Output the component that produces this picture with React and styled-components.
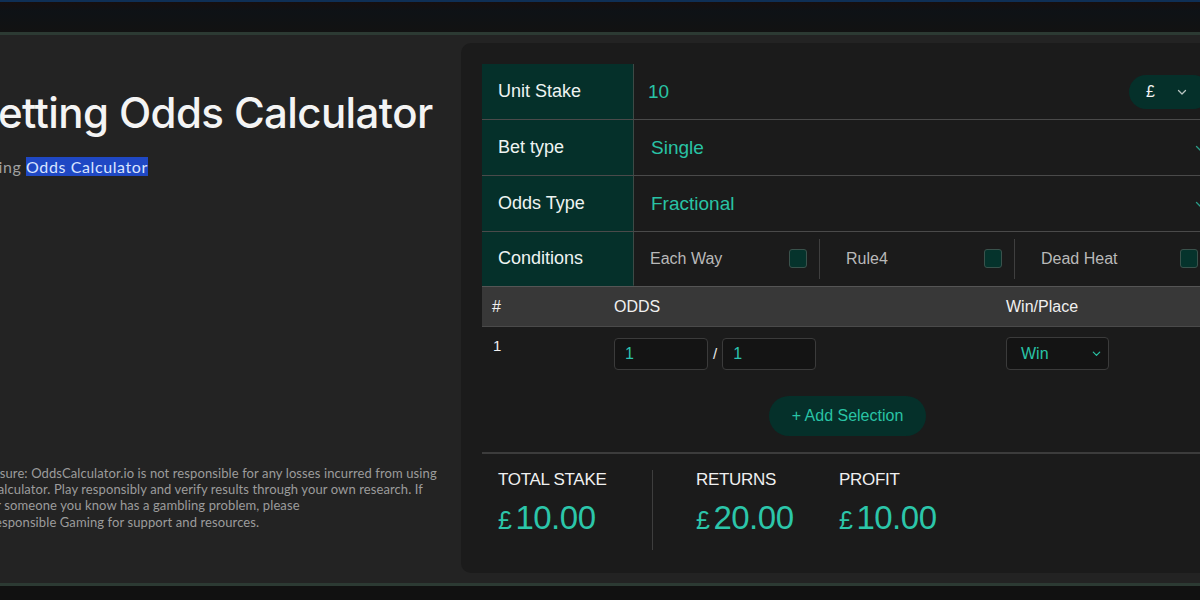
import styled, { createGlobalStyle } from 'styled-components';

const GlobalStyle = createGlobalStyle`
  body {
    margin: 0;
    background: #121212;
    overflow: hidden;
    font-family: "Liberation Sans", Arial, sans-serif;
  }
`;

const Page = styled.div`
  width: 1200px;
  height: 600px;
  display: flex;
  flex-direction: column;
  overflow: hidden;
  background: #111;
`;

const TopBar = styled.div`
  height: 30px;
  flex-shrink: 0;
  border-top: 2px solid #0f2f55;
  background: linear-gradient(#160f0f, #0e1216 30%, #121212);
`;

const Main = styled.main`
  height: 548px;
  flex-shrink: 0;
  display: grid;
  grid-template-columns: 461px 760px;
  background: #232323;
  border-top: 3px solid #2c3a33;
  border-bottom: 3px solid #2c3a33;
  overflow: hidden;
`;

const Intro = styled.section`
  display: flex;
  flex-direction: column;
  padding-top: 52px;
  overflow: hidden;
  font-family: "Lato", "Inter", sans-serif;
`;

const Title = styled.h1`
  margin: 0 0 0 ${p => p.$shift}px;
  font-family: "Inter", sans-serif;
  font-size: 42px;
  font-weight: 500;
  letter-spacing: -0.6px;
  color: #f4f4f4;
  white-space: nowrap;
`;

const Crumb = styled.p`
  margin: 19px 0 0 ${p => p.$shift}px;
  font-size: 16px;
  color: #a0a0a0;
  white-space: nowrap;
  letter-spacing: 0.6px;
`;

const Selected = styled.span`
  background: #1f48c4;
  color: #d9e4ff;
`;

const Disclaimer = styled.p`
  margin: auto 0 53px ${p => p.$shift}px;
  font-size: 13px;
  line-height: 16.3px;
  color: #9c9c9c;
  white-space: nowrap;
  letter-spacing: 0.1px;
`;

const Line = styled.span`
  display: block;
  margin-left: ${p => p.$indent || 0}px;
`;

const Card = styled.section`
  margin-top: 8px;
  margin-bottom: 10px;
  background: #1b1b1b;
  border-radius: 10px 0 0 10px;
  padding: 21px 0 0 21px;
  display: flex;
  flex-direction: column;
`;

const SettingsTable = styled.div`
  display: grid;
  grid-template-columns: 152px 1fr;
`;

const Label = styled.div`
  height: ${p => p.$h || 56}px;
  display: flex;
  align-items: center;
  padding-left: 16px;
  background: #05302a;
  color: #eef4f2;
  font-size: 18px;
  border-bottom: 1px solid ${p => (p.$last ? 'transparent' : '#4a4a4a')};
  border-right: 1px solid #3d4a46;
  box-sizing: border-box;
`;

const Value = styled.div`
  height: ${p => p.$h || 56}px;
  display: flex;
  align-items: center;
  padding: 0 0 0 ${p => p.$pad ?? 17}px;
  color: #29c3a5;
  font-size: 19px;
  border-bottom: 1px solid ${p => (p.$last ? 'transparent' : '#4a4a4a')};
  box-sizing: border-box;
  justify-content: space-between;
`;

const CurrencyPill = styled.div`
  display: flex;
  align-items: center;
  gap: 21px;
  height: 34px;
  padding: 0 22px 0 17px;
  margin-right: 11px;
  border-radius: 17px;
  background: #05302a;
  color: #f2f2f2;
  font-size: 16px;
`;

const Chevron = ({ color = '#b9c4c1', size = 12 }) => (
  <svg width={size} height={size} viewBox="0 0 12 12" fill="none">
    <path d="M2.5 4.5 6 8l3.5-3.5" stroke={color} strokeWidth="1.3" strokeLinecap="round" strokeLinejoin="round" />
  </svg>
);

const EdgeChevron = styled.span`
  margin-right: 15px;
  display: flex;
`;

const Conditions = styled.div`
  display: grid;
  grid-template-columns: 186px 195px 195px;
  height: 100%;
  width: 100%;
  align-items: center;
`;

const Condition = styled.div`
  display: flex;
  align-items: center;
  justify-content: space-between;
  height: 40px;
  padding: 0 12px 0 ${p => (p.$first ? 16 : 26)}px;
  color: #b9b9b9;
  font-size: 16px;
  border-right: ${p => (p.$divider ? '1px solid #3f3f3f' : 'none')};
`;

const Check = styled.span`
  width: 16px;
  height: 17px;
  border-radius: 3px;
  background: #05332c;
  border: 1px solid #3a524c;
`;

const SelHeader = styled.div`
  display: grid;
  grid-template-columns: 122px 392px 1fr;
  height: 39px;
  align-items: center;
  padding-left: 10px;
  background: #383838;
  color: #f0f0f0;
  font-size: 16px;
  border-top: 1px solid #555;
  border-bottom: 1px solid #4a4a4a;
`;

const SelRow = styled.div`
  display: grid;
  grid-template-columns: 121px 392px 1fr;
  align-items: start;
  padding: 10px 0 0 11px;
  height: 69px;
  box-sizing: border-box;
  color: #f0f0f0;
  font-size: 15px;
`;

const Odds = styled.div`
  display: flex;
  align-items: center;
  gap: 5px;
  height: 33px;
  color: #eaeaea;
`;

const OddsInput = styled.div`
  width: 94px;
  height: 32px;
  box-sizing: border-box;
  display: flex;
  align-items: center;
  padding-left: 10px;
  border: 1px solid #3b3b3b;
  border-radius: 4px;
  background: #141414;
  color: #2cc2b0;
  font-size: 16px;
`;

const Select = styled.div`
  width: 103px;
  height: 33px;
  box-sizing: border-box;
  display: flex;
  align-items: center;
  justify-content: space-between;
  padding: 0 6px 0 14px;
  border: 1px solid #3b3b3b;
  border-radius: 4px;
  background: #141414;
  color: #29c3a5;
  font-size: 16px;
`;

const AddRow = styled.div`
  display: flex;
  align-items: flex-start;
  padding-left: 287px;
  height: 56px;
`;

const AddButton = styled.button`
  width: 157px;
  height: 40px;
  border: none;
  border-radius: 20px;
  background: #05302a;
  color: #29c3a5;
  font-family: "Liberation Sans", Arial, sans-serif;
  font-size: 16px;
  cursor: pointer;
`;

const Totals = styled.div`
  display: flex;
  align-items: flex-start;
  border-top: 2px solid #3c3c3c;
  padding: 16px 0 0 16px;
  flex: 1;
`;

const Stat = styled.div`
  display: flex;
  flex-direction: column;
  gap: 9px;
  margin-right: ${p => p.$mr || 0}px;
  border-right: ${p => (p.$divider ? '1px solid #3e3e3e' : 'none')};
  height: 80px;
`;

const StatLabel = styled.div`
  color: #f0f0f0;
  font-size: 17px;
  letter-spacing: -0.3px;
`;

const Amount = styled.div`
  color: #2cc6aa;
  font-size: 33px;
  letter-spacing: -0.5px;
  display: flex;
  align-items: baseline;
  gap: 4px;
`;

const Pound = styled.span`
  font-size: 25px;
`;

const stats = [
  { label: 'TOTAL STAKE', value: '10.00', divider: true, width: 154 },
  { label: 'RETURNS', value: '20.00', width: 143 },
  { label: 'PROFIT', value: '10.00', width: 150 },
];

export default function App() {
  return (
    <Page>
      <GlobalStyle />
      <TopBar />
      <Main>
        <Intro>
          <Title $shift={-29}>Betting Odds Calculator</Title>
          <Crumb $shift={-34}>
            Betting <Selected>Odds Calculator</Selected>
          </Crumb>
          <Disclaimer $shift={-36}>
            <Line>Disclosure: OddsCalculator.io is not responsible for any losses incurred from using</Line>
            <Line $indent={3}>this calculator. Play responsibly and verify results through your own research. If</Line>
            <Line>you or someone you know has a gambling problem, please</Line>
            <Line $indent={-4}>visit Responsible Gaming for support and resources.</Line>
          </Disclaimer>
        </Intro>

        <Card>
          <SettingsTable>
            <Label>Unit Stake</Label>
            <Value $pad={14}>
              10
              <CurrencyPill>
                £
                <Chevron />
              </CurrencyPill>
            </Value>
            <Label>Bet type</Label>
            <Value>
              Single
              <EdgeChevron><Chevron color="#2a9c88" /></EdgeChevron>
            </Value>
            <Label>Odds Type</Label>
            <Value>
              Fractional
              <EdgeChevron><Chevron color="#2a9c88" /></EdgeChevron>
            </Value>
            <Label $h={54} $last>Conditions</Label>
            <Value $h={54} $pad={0} $last>
              <Conditions>
                <Condition $first $divider>
                  Each Way <Check />
                </Condition>
                <Condition $divider>
                  Rule4 <Check />
                </Condition>
                <Condition>
                  Dead Heat <Check />
                </Condition>
              </Conditions>
            </Value>
          </SettingsTable>

          <SelHeader>
            <span>#</span>
            <span>ODDS</span>
            <span>Win/Place</span>
          </SelHeader>
          <SelRow>
            <span>1</span>
            <Odds>
              <OddsInput>1</OddsInput>/<OddsInput>1</OddsInput>
            </Odds>
            <Select>
              Win
              <Chevron color="#29c3a5" size={11} />
            </Select>
          </SelRow>
          <AddRow>
            <AddButton>+ Add Selection</AddButton>
          </AddRow>

          <Totals>
            {stats.map(s => (
              <Stat
                key={s.label}
                $divider={s.divider}
                $mr={s.divider ? 43 : 0}
                style={{ width: s.width }}
              >
                <StatLabel>{s.label}</StatLabel>
                <Amount>
                  <Pound>£</Pound>
                  {s.value}
                </Amount>
              </Stat>
            ))}
          </Totals>
        </Card>
      </Main>
    </Page>
  );
}
